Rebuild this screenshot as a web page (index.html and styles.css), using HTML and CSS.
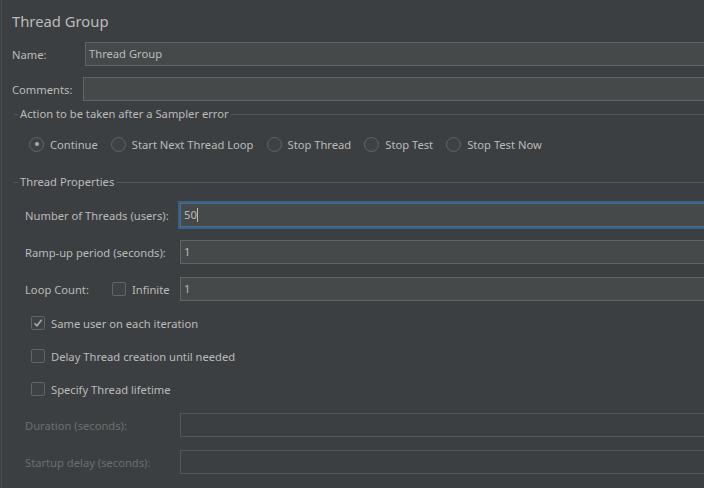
FILE: index.html
```html
<!DOCTYPE html>
<html>
<head>
<meta charset="utf-8">
<link rel="stylesheet" href="styles.css">
</head>
<body>
<div class="page">
  <div class="title">Thread Group</div>
  <div class="row row-name">
    <span class="lbl lbl-name">Name:</span>
    <div class="input">Thread Group</div>
  </div>
  <div class="row row-comments">
    <span class="lbl lbl-comments">Comments:</span>
    <div class="input"></div>
  </div>

  <div class="group-title g1"><span>Action to be taken after a Sampler error</span></div>
  <div class="radios">
    <label class="radio"><span class="circle on"></span>Continue</label>
    <label class="radio"><span class="circle"></span>Start Next Thread Loop</label>
    <label class="radio"><span class="circle"></span>Stop Thread</label>
    <label class="radio"><span class="circle"></span>Stop Test</label>
    <label class="radio"><span class="circle"></span>Stop Test Now</label>
  </div>

  <div class="group-title g2"><span>Thread Properties</span></div>
  <div class="prop-row first">
    <span class="plbl">Number of Threads (users):</span>
    <div class="input focus">50<span class="caret"></span></div>
  </div>
  <div class="prop-row">
    <span class="plbl">Ramp-up period (seconds):</span>
    <div class="input">1</div>
  </div>
  <div class="prop-row">
    <span class="plbl loop">Loop Count:</span>
    <span class="check-inline"><span class="box"></span>Infinite</span>
    <div class="input">1</div>
  </div>

  <div class="check-row first"><span class="box checked"><svg width="10" height="10" viewBox="0 0 10 10"><path d="M1.5 5.2 L4 7.8 L8.6 1.8" fill="none" stroke="#a9a9a9" stroke-width="1.6"/></svg></span>Same user on each iteration</div>
  <div class="check-row"><span class="box"></span>Delay Thread creation until needed</div>
  <div class="check-row"><span class="box"></span>Specify Thread lifetime</div>

  <div class="prop-row disabled first-dis">
    <span class="plbl">Duration (seconds):</span>
    <div class="input dis"></div>
  </div>
  <div class="prop-row disabled">
    <span class="plbl">Startup delay (seconds):</span>
    <div class="input dis"></div>
  </div>
</div>
</body>
</html>
```
FILE: styles.css
```css
html, body {
  margin: 0;
  padding: 0;
  background: #3c3f41;
  overflow: hidden;
  width: 704px;
  height: 488px;
}
.page {
  margin-left: 1px;
  border-left: 1px solid #4a4d4f;
  width: 702px;
  height: 488px;
  overflow: hidden;
  font-family: "Noto Sans", "Open Sans", sans-serif;
  font-size: 11.2px;
  color: #bbbbbb;
  display: flex;
  flex-direction: column;
}
.title {
  height: 42px;
  line-height: 42px;
  font-size: 14.8px;
  padding-left: 10px;
}
.row {
  display: flex;
  align-items: center;
  height: 24px;
  margin-right: -20px;
}
.row-comments { margin-top: 11px; }
.lbl { padding-left: 10px; }
.lbl-name { width: 73px; }
.lbl-comments { width: 71px; }
.input {
  flex: 1;
  height: 24px;
  box-sizing: border-box;
  background: #45494a;
  border: 1px solid #646464;
  padding-left: 3px;
  line-height: 22px;
  color: #bbbbbb;
}
.group-title {
  display: flex;
  align-items: center;
  height: 14px;
  line-height: 14px;
}
.group-title::before {
  content: "";
  margin-left: 12px;
  width: 4px;
  height: 1px;
  background: #555759;
}
.group-title span { padding: 0 2px; }
.group-title::after {
  content: "";
  flex: 1;
  height: 1px;
  background: #555759;
}
.g1 { margin-top: 6px; }
.g2 { margin-top: 21px; }
.radios {
  margin-top: 13px;
  height: 20px;
  display: flex;
  align-items: center;
  padding-left: 27px;
  gap: 13px;
}
.radio {
  display: flex;
  align-items: center;
}
.circle {
  box-sizing: border-box;
  width: 15px;
  height: 15px;
  border: 1px solid #646464;
  border-radius: 50%;
  margin-right: 6px;
  display: flex;
  align-items: center;
  justify-content: center;
  background: #3f4244;
}
.circle.on::after {
  content: "";
  width: 4px;
  height: 4px;
  border-radius: 50%;
  background: #a9a9a9;
}
.prop-row {
  display: flex;
  align-items: center;
  height: 24px;
  margin-top: 13px;
  margin-right: -20px;
}
.prop-row.first { margin-top: 14px; }
.plbl {
  padding-left: 23px;
  width: 155px;
  flex: none;
}
.plbl.loop { width: 87px; }
.check-inline {
  display: flex;
  align-items: center;
  width: 68px;
  flex: none;
}
.box {
  box-sizing: border-box;
  width: 14px;
  height: 14px;
  border: 1px solid #646464;
  border-radius: 2px;
  background: #3f4244;
  margin-right: 6px;
  display: flex;
  align-items: center;
  justify-content: center;
  flex: none;
}
.input.focus {
  outline: 2px solid #3d6185;
  border-color: #466d94;
}
.caret {
  display: inline-block;
  width: 1px;
  height: 14px;
  background: #bbbbbb;
  vertical-align: -3px;
}
.check-row {
  display: flex;
  align-items: center;
  height: 20px;
  margin-top: 13px;
  padding-left: 29px;
}
.check-row.first { margin-top: 12px; }
.disabled { color: #6e6e6e; }
.prop-row.first-dis { margin-top: 14px; }
.input.dis {
  background: #3c3f41;
  border-color: #555759;
}
```
